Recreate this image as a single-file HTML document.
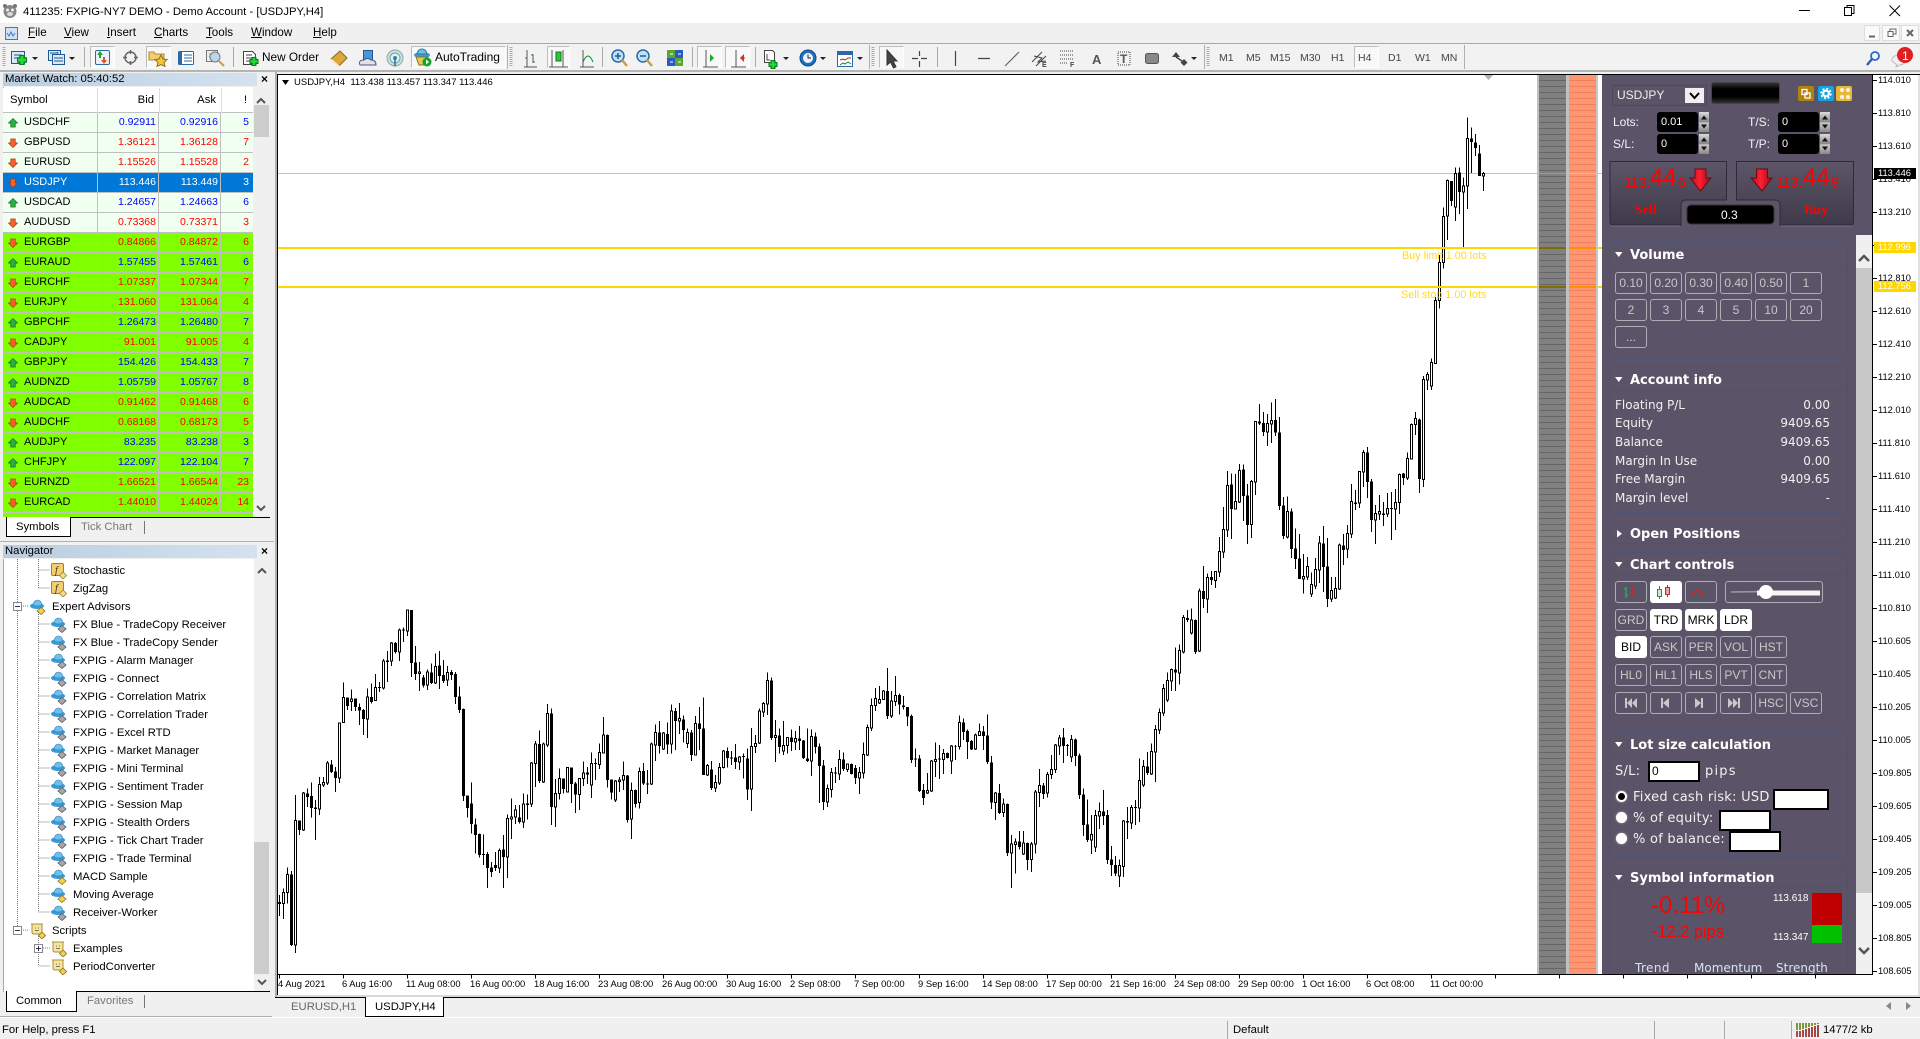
<!DOCTYPE html>
<html><head><meta charset="utf-8"><title>MT4</title>
<style>
html,body{margin:0;padding:0}
body{width:1920px;height:1039px;position:relative;overflow:hidden;background:#f0f0f0;font:11.3px/14px "Liberation Sans",sans-serif;color:#000}
.t,.p,.x,.box,.btn,.r,.ti,.tr{position:absolute;white-space:nowrap}
.box{box-sizing:border-box}
.p{left:1878px;font-size:9.3px;line-height:12px}
.x{top:978px;font-size:9.4px;line-height:12px}
.mn{top:26px;font-size:11.6px}
.tf{top:51px;color:#444;font-size:10.5px}
.r{left:3px;width:250px;height:20px;box-sizing:border-box;border-bottom:1px solid #c0c0c0;background:#f0fff0;line-height:19px;font-size:11px}
.g{background:#7fff00}
.r svg{position:absolute;left:5px;top:5px;width:10px;height:10px}
.r b{font-weight:normal;position:absolute;left:21px;top:0}
.r i{font-style:normal;position:absolute;top:0;height:19px;box-sizing:border-box;text-align:right;border-left:1px solid #c0c0c0;font-size:10.5px}
.r .b{left:94px;width:61px;padding-right:2px}
.r .a{left:155px;width:62px;padding-right:2px}
.r .n{left:217px;width:33px;padding-right:4px}
.u i{color:#00f}.d i{color:#f00}
.sel{background:#0078d7;color:#fff}.sel i{color:#fff}
.ti{left:73px;height:14px;line-height:14px;margin-top:.5px}
.ti svg,.tr svg{position:absolute;left:-22px;top:-1px;width:16px;height:16px}
.tr{left:52px;line-height:14px;margin-top:.5px}
.w{color:#f2f2f2;font-size:12px}
.dv{color:#f0f0f0;font:12px/14px "DejaVu Sans",sans-serif}
.lc{color:#f0f0f0;font:13px/14px "DejaVu Sans",sans-serif;letter-spacing:.25px}
.hd{color:#fff;font:bold 13px/14px "DejaVu Sans",sans-serif;left:1630px}
.bx{position:absolute;box-sizing:border-box;left:1609px;width:239px;border:1px solid #4c5376;border-radius:4px}
.ln{position:absolute;left:1609px;width:239px;height:1px;background:#4c5376}
.btn{box-sizing:border-box;width:32px;height:22px;border:1px solid #aeaeb6;border-radius:3px;color:#c8c8c8;text-align:center;font-size:12px;line-height:20px}
.on{background:#fff;color:#000;border-color:#fff}
.in{position:absolute;background:#000;border-radius:3px;color:#fff;box-sizing:border-box;padding-left:4px;height:20px;line-height:20px;font-size:11px;width:41px}
.sp{position:absolute;width:10px;height:20px;background:linear-gradient(#ddd,#888 49%,#555 50%,#ccc 52%,#888)}
.wi{position:absolute;box-sizing:border-box;background:#fff;border:2px solid #000;height:21px;color:#000;font-size:12px;line-height:17px;padding-left:2px}
.rad{position:absolute;left:1616px;width:11px;height:11px;border-radius:50%;background:#fff;box-shadow:0 0 2px #bbb}
.pb{position:absolute;top:46px;height:22px;box-sizing:border-box;border:1px solid #bdbdbd;border-right-color:#fff;border-bottom-color:#fff;background:#f8f8f8}
</style></head><body>

<svg width="0" height="0" style="position:absolute"><defs>
<symbol id="u" viewBox="0 0 11 11"><polygon points="5.5,.5 10.5,5.5 8,5.5 8,10 3,10 3,5.5 .5,5.5" fill="#2fae45" stroke="#0a6a1f" stroke-width=".7"/></symbol>
<symbol id="n" viewBox="0 0 11 11"><polygon points="3,1 8,1 8,5.5 10.5,5.5 5.5,10.5 .5,5.5 3,5.5" fill="#f4612a" stroke="#b23010" stroke-width=".7"/></symbol>
<symbol id="f" viewBox="0 0 16 16"><rect x=".5" y=".5" width="12" height="12" rx="1.5" fill="#f4cf6e" stroke="#a08030"/><text x="4" y="10.5" font-size="10" font-style="italic" font-family="Liberation Serif,serif" fill="#333">f</text><polygon points="12,9 15.5,12.5 12,16 8.500,12.500" fill="#f6dc8a" stroke="#a08030" stroke-width=".8"/></symbol>
<symbol id="hg" viewBox="0 0 16 16"><ellipse cx="7" cy="7" rx="7" ry="3" fill="#3a9ad8"/><path d="M3 6Q4 1 7.500 1T12 6Q7 8 3 6z" fill="#6cc0ea" stroke="#2a78b0" stroke-width=".6"/><polygon points="11,8.500 15,12 11,15.500 7,12" fill="#a8a8a8" stroke="#555" stroke-width=".8"/></symbol>
<symbol id="hy" viewBox="0 0 16 16"><ellipse cx="7" cy="7" rx="7" ry="3" fill="#3a9ad8"/><path d="M3 6Q4 1 7.500 1T12 6Q7 8 3 6z" fill="#6cc0ea" stroke="#2a78b0" stroke-width=".6"/><polygon points="11,8.500 15,12 11,15.500 7,12" fill="#f4d050" stroke="#8a7020" stroke-width=".8"/></symbol>
<symbol id="sc" viewBox="0 0 16 16"><path d="M2 1H12V11H4Q2 11 2 9zM1 1H13" fill="#f6e49a" stroke="#a89040"/><path d="M5 5h1M8 5h1M5 7.500h4" stroke="#776" /><polygon points="12,9 15.500,12.500 12,16 8.500,12.500" fill="#f4d050" stroke="#8a7020" stroke-width=".8"/></symbol>
<linearGradient id="bt" x1="0" y1="0" x2="0" y2="1"><stop offset="0" stop-color="#5c5668"/><stop offset="1" stop-color="#3f3a4a"/></linearGradient>
<linearGradient id="ra" x1="0" y1="0" x2="1" y2="0"><stop offset="0" stop-color="#b50f1f"/><stop offset=".45" stop-color="#ff2030"/><stop offset="1" stop-color="#a00a18"/></linearGradient>
</defs></svg>

<!-- title bar -->
<div class="box" style="left:0;top:0;width:1920px;height:23px;background:#fff"></div>
<svg class="box" style="left:2px;top:3px" width="16" height="16" viewBox="0 0 16 16"><circle cx="8" cy="8.500" r="6.500" fill="#888"/><circle cx="3" cy="3" r="2" fill="#777"/><circle cx="13" cy="3" r="2" fill="#777"/><circle cx="5.500" cy="7" r="1.500" fill="#eee"/><circle cx="10.500" cy="7" r="1.500" fill="#eee"/><ellipse cx="8" cy="11" rx="3" ry="2" fill="#ddd"/></svg>
<div class="t" style="left:23px;top:5px">411235: FXPIG-NY7 DEMO - Demo Account - [USDJPY,H4]</div>
<svg class="box" style="left:1790px;top:0" width="130" height="23"><path d="M9 10.500H20" stroke="#000"/><path d="M54.500 7.500h7v8h-7zM57 7.500V5.500h7v8h-2.500" fill="none" stroke="#000"/><path d="M99.500 5.500l10.500 10.500M110 5.500L99.500 16" stroke="#000" fill="none"/></svg>

<!-- menu bar -->
<div class="box" style="left:0;top:23px;width:1920px;height:20px;background:#f0f0f0"></div>
<svg class="box" style="left:4px;top:25px" width="16" height="16"><rect x="1.500" y="2.500" width="12" height="12" fill="#cfe3f5" stroke="#3a7cc0"/><path d="M3 8l2 3 2-4 2 4 2-3" fill="none" stroke="#3a7cc0"/></svg>
<div class="t mn" style="left:28px"><u>F</u>ile</div><div class="t mn" style="left:64px"><u>V</u>iew</div><div class="t mn" style="left:107px"><u>I</u>nsert</div><div class="t mn" style="left:154px"><u>C</u>harts</div><div class="t mn" style="left:206px"><u>T</u>ools</div><div class="t mn" style="left:251px"><u>W</u>indow</div><div class="t mn" style="left:313px"><u>H</u>elp</div>
<div class="box" style="left:1864px;top:25px;width:16px;height:16px;background:#fafafa;border:1px solid #ddd"></div>
<div class="box" style="left:1882px;top:25px;width:18px;height:16px;background:#fafafa;border:1px solid #ddd"></div>
<div class="box" style="left:1901px;top:25px;width:18px;height:16px;background:#fafafa;border:1px solid #ddd"></div>
<svg class="box" style="left:1864px;top:25px" width="56" height="16"><path d="M5 11.500h6" stroke="#666" stroke-width="2"/><path d="M24 6.500h5v5h-5zM26 6V4h6v5h-3" fill="none" stroke="#666"/><path d="M43 5l6 6M49 5l-6 6" stroke="#666" stroke-width="2"/></svg>
<div class="box" style="left:0;top:43px;width:1920px;height:1px;background:#a8a8a8"></div>
<div class="box" style="left:0;top:44px;width:1920px;height:26px;background:#f2f2f2"></div>
<div class="box" style="left:0;top:70px;width:1920px;height:2px;background:#b4b4b4"></div>

<!-- toolbar pressed buttons -->
<div class="pb" style="left:90px;width:25px"></div><div class="pb" style="left:146px;width:25px"></div>
<div class="pb" style="left:411px;width:95px"></div><div class="pb" style="left:547px;width:23px"></div>
<div class="pb" style="left:697px;width:25px"></div><div class="pb" style="left:725px;width:25px"></div>
<div class="pb" style="left:879px;width:25px"></div><div class="pb" style="left:1354px;width:25px"></div>

<!-- toolbar icons -->
<svg class="box" style="left:0;top:44px" width="1920" height="27" viewBox="0 44 1920 27">
<g fill="none" stroke="#aaa"><path d="M84.500 47v20M233.500 47v20M602.500 47v20M692.500 47v20M755.500 47v20M937.500 47v20"/></g>
<g stroke="#b0b0b0"><path d="M507.500 45v24M869.500 45v24M1204.500 45v24M1464.500 45v24"/></g>
<g stroke="#aaa" stroke-width="3" stroke-dasharray="1 1"><path d="M4 47v20M511 47v20M873 47v20M1208 47v20"/></g>
<g fill="#222"><path d="M32 57h6l-3 3zM69 57h6l-3 3zM783 57h6l-3 3zM820 57h6l-3 3zM857 57h6l-3 3zM1191 57h6l-3 3z"/></g>
<!-- new chart -->
<rect x="11.500" y="51.500" width="13" height="12" fill="#dce8f4" stroke="#1f5a98"/><path d="M14 55h8M14 58h8" stroke="#1f5a98"/>
<path d="M22 55v10M17 60h10" stroke="#0a7a1a" stroke-width="5.500"/><path d="M22 56v8M18 60h8" stroke="#28d83a" stroke-width="3"/>
<!-- profiles -->
<rect x="48.500" y="50.500" width="12" height="10" fill="#dce8f4" stroke="#1f5a98"/><rect x="52.500" y="54.500" width="12" height="10" fill="#dce8f4" stroke="#1f5a98"/><path d="M50 53h8l-1-1M54 58h9M54 61h9" stroke="#1f5a98" fill="none"/>
<!-- market watch button -->
<rect x="95.500" y="50.500" width="14" height="14" rx="1.500" fill="#eaf3fb" stroke="#2a6aa8"/><path d="M100 51l-3 4h2v3h2v-3h2z" fill="#1ea82e"/><path d="M104 64l3-4h-2v-3h-2v3h-2z" fill="#e8501f"/>
<!-- crosshair -->
<circle cx="130.500" cy="57.500" r="5.500" fill="none" stroke="#666" stroke-width="1.500"/><path d="M130.500 50v4M130.500 61v4M123 57.500h4M134 57.500h4" stroke="#666" stroke-width="1.500"/>
<!-- folder star -->
<path d="M149 52h5l1 2h9v6h-15z" fill="#f4cf6e" stroke="#b08a30"/><path d="M161 55l2 4 4 .5-3 3 1 4-4-2-4 2 1-4-3-3 4-.5z" fill="#f4c83a" stroke="#8a7020"/>
<!-- list -->
<rect x="178.500" y="51.500" width="15" height="13" rx="1" fill="#fff" stroke="#2a6aa8"/><rect x="179" y="52" width="3" height="12" fill="#2a6aa8"/><path d="M184 55h8M184 58h8M184 61h8" stroke="#2a6aa8"/>
<!-- mag chart -->
<rect x="206.500" y="50.500" width="11" height="11" fill="#eee" stroke="#777"/><path d="M209 54h6M209 57h6" stroke="#888"/><circle cx="215" cy="57" r="5" fill="#bcd6ea" stroke="#778"/><path d="M219 61l5 5" stroke="#c9a23a" stroke-width="2"/>
<!-- new order -->
<path d="M243.500 51.500h9l3 3v10h-12z" fill="#fff" stroke="#444"/><path d="M246 55h6M246 58h7M246 61h7" stroke="#444"/><path d="M254 57v9M249.500 61.500h9" stroke="#0a7a1a" stroke-width="5"/><path d="M254 58v7M250.500 61.500h7" stroke="#28d83a" stroke-width="2.500"/>
<!-- book -->
<path d="M331 59l9-8 7 7-8 8z" fill="#dca83a" stroke="#8a6520"/><path d="M331 59l8 7 0 1" stroke="#fff3c0" fill="none"/>
<!-- cloud -->
<rect x="363.500" y="50.500" width="9" height="10" fill="#4a94d8" stroke="#1f5a98"/><path d="M360 65q-2-5 4-5 3-3 7 0 5 0 5 5z" fill="#d9e4f0" stroke="#557"/>
<!-- signal -->
<circle cx="395" cy="58" r="8" fill="#cfe0d8" stroke="#8aa"/><circle cx="395" cy="58" r="5" fill="#e5f0e8" stroke="#6aa"/><circle cx="395" cy="58" r="2" fill="#2a8ac8"/><path d="M395 58v8" stroke="#2a6aa8" stroke-width="1.500"/>
<!-- autotrading -->
<ellipse cx="422" cy="55" rx="8" ry="3" fill="#3a9ad8"/><path d="M417 54q1-5 5-5t5 5z" fill="#6cc0ea" stroke="#2a78b0"/><path d="M416 57l3 8h6l3-8z" fill="#e8c84a" stroke="#8a7020"/><circle cx="427" cy="62" r="4.500" fill="#14a32a"/><path d="M426 59.500v5l3-2.500z" fill="#fff"/>
<!-- chart types -->
<g fill="none" stroke="#555"><path d="M524 67h13M527 50v17"/><path d="M533 54v9"/></g><path d="M525 58h2M533 62h2M533 55h-2" stroke="#0a9a2a"/>
<g fill="none" stroke="#555"><path d="M549 67h19M552 50v17M563 50v17"/></g><rect x="556" y="52" width="5" height="9" fill="#2ac83a" stroke="#0a7a1a"/>
<g fill="none" stroke="#555"><path d="M580 67h14M583 50v17"/></g><path d="M583 62q5-12 10 0" fill="none" stroke="#0a8a2a"/>
<!-- zoom -->
<circle cx="618" cy="56" r="6" fill="#bfe0f5" stroke="#2a6aa8" stroke-width="1.500"/><path d="M615 56h6M618 53v6" stroke="#1f5a98" stroke-width="1.500"/><path d="M622 60l5 6" stroke="#c9a23a" stroke-width="2.500"/>
<circle cx="643" cy="56" r="6" fill="#bfe0f5" stroke="#2a6aa8" stroke-width="1.500"/><path d="M640 56h6" stroke="#1f5a98" stroke-width="1.500"/><path d="M647 60l5 6" stroke="#c9a23a" stroke-width="2.500"/>
<!-- tile -->
<rect x="667" y="50" width="8" height="8" fill="#5aa82a"/><rect x="675" y="50" width="8" height="8" fill="#2a5ac8"/><rect x="667" y="58" width="8" height="8" fill="#2a5ac8"/><rect x="675" y="58" width="8" height="8" fill="#5aa82a"/><path d="M670 54h3M678 54h3M670 62h3M678 62h3" stroke="#fff"/>
<!-- autoscroll shift -->
<g fill="none" stroke="#555"><path d="M703 67h15M706 50v17"/><path d="M731 67h15M736 50v17"/></g><path d="M710 54v8l4-4z" fill="#1ea82e"/><path d="M744 54v8l-4-4z" fill="#d8301f"/><path d="M740 58h5" stroke="#d8301f"/>
<!-- add indicator -->
<path d="M764.500 50.500h8l2 2v10h-10z" fill="#fff" stroke="#444"/><path d="M767 54v6h3" fill="none" stroke="#444"/><path d="M773 60v9M768.500 64.500h9" stroke="#0a7a1a" stroke-width="5"/><path d="M773 61v7M769.500 64.500h7" stroke="#28d83a" stroke-width="2.500"/>
<!-- clock -->
<circle cx="808" cy="58" r="8" fill="#1c70c0" stroke="#104a88"/><circle cx="808" cy="58" r="5" fill="#f0f4fa"/><path d="M808 54.500v3.500h3" stroke="#222" fill="none"/>
<!-- template -->
<rect x="837.500" y="51.500" width="15" height="15" fill="#fff" stroke="#2a6aa8"/><rect x="838" y="52" width="14" height="3" fill="#2a6aa8"/><path d="M840 60l3-1 2 1 3-2 3 0" stroke="#a03010" fill="none"/><path d="M840 65l3-2 2 1 3-2 3 2" stroke="#1a8a2a" fill="none"/>
<!-- cursor -->
<path d="M887 50v15l3.500-3 3 6 2.500-1.200-3-5.800h4z" fill="#444" stroke="#333"/>
<!-- cross -->
<path d="M919.500 51v5M919.500 61v6M912 58.500h6M921 58.500h6" stroke="#444" stroke-width="1.200"/>
<path d="M955.500 51v15M978 58.500h12" stroke="#444" stroke-width="1.200"/><path d="M1005 66l14-14" stroke="#666" stroke-width="1.200"/>
<!-- channel -->
<path d="M1032 62l10-10M1036 66l10-10M1034 56l8 2-4 4 8-1" stroke="#444" fill="none"/><text x="1042" y="67" font-size="7" font-weight="bold" fill="#444" font-family="Liberation Sans,sans-serif">E</text>
<!-- fibo -->
<path d="M1060 51h14M1060 55h14M1060 59h14M1060 63h7" stroke="#444" stroke-dasharray="1 1"/><text x="1070" y="67" font-size="7" font-weight="bold" fill="#444" font-family="Liberation Sans,sans-serif">F</text>
<text x="1092" y="64" font-size="13" font-weight="bold" fill="#555" font-family="Liberation Sans,sans-serif">A</text>
<rect x="1118" y="52" width="12" height="13" fill="none" stroke="#444" stroke-dasharray="1 1"/><text x="1120" y="63" font-size="12" font-weight="bold" fill="#555" font-family="Liberation Sans,sans-serif">T</text>
<rect x="1145.500" y="53.500" width="13" height="10" rx="2" fill="#888" stroke="#555"/>
<path d="M1176 52l-4 5h8zM1184 59l-3.500 3.500 3.500 3.500 3.500-3.500z" fill="#444"/><path d="M1176 57l6 4" stroke="#444" stroke-width="1.500"/>
<!-- search + chat -->
<circle cx="1875" cy="56" r="4" fill="none" stroke="#2a6ac8" stroke-width="1.800"/><path d="M1872 59l-5 6" stroke="#2a5ab0" stroke-width="2.200"/>
<path d="M1892 61a7 5 0 1 1 8 4l-4 2 1-2z" fill="#f0f0f0" stroke="#bbb"/>
<circle cx="1905" cy="55" r="8" fill="#e02020"/><text x="1902" y="60" font-size="12" fill="#fff" font-family="Liberation Sans,sans-serif">1</text>
</svg>
<div class="t" style="left:262px;top:50px;font-size:11.800px">New Order</div>
<div class="t" style="left:435px;top:50px;font-size:12px">AutoTrading</div>
<div class="t tf" style="left:1219px">M1</div><div class="t tf" style="left:1246px">M5</div><div class="t tf" style="left:1270px">M15</div><div class="t tf" style="left:1300px">M30</div><div class="t tf" style="left:1331px">H1</div><div class="t tf" style="left:1358px">H4</div><div class="t tf" style="left:1388px">D1</div><div class="t tf" style="left:1415px">W1</div><div class="t tf" style="left:1441px">MN</div>

<!-- Market watch -->
<div class="box" style="left:3px;top:73px;width:254px;height:13px;background:linear-gradient(90deg,#b9cde0,#d4e2ef)"></div>
<div class="t" style="left:5px;top:73px;font-size:11.300px;line-height:13px">Market Watch: 05:40:52</div>
<div class="t" style="left:261px;top:73px;font-weight:bold;font-size:12px;line-height:13px">×</div>
<div class="box" style="left:3px;top:87px;width:250px;height:430px;background:#fff;border-left:1px solid #aaa"></div>
<div class="box" style="left:3px;top:88px;width:250px;height:25px;background:#fff;border-bottom:1px solid #c0c0c0"></div>
<div class="box" style="left:97px;top:88px;width:1px;height:25px;background:#ddd"></div><div class="box" style="left:159px;top:88px;width:1px;height:25px;background:#ddd"></div><div class="box" style="left:221px;top:88px;width:1px;height:25px;background:#ddd"></div>
<div class="t" style="left:10px;top:93px;font-size:11.300px">Symbol</div><div class="t" style="right:1766px;top:93px">Bid</div><div class="t" style="right:1704px;top:93px">Ask</div><div class="t" style="right:1673px;top:93px">!</div>

<div class="r u" style="top:113px"><svg><use href="#u"/></svg><b>USDCHF</b><i class="b">0.92911</i><i class="a">0.92916</i><i class="n">5</i></div>
<div class="r d" style="top:133px"><svg><use href="#n"/></svg><b>GBPUSD</b><i class="b">1.36121</i><i class="a">1.36128</i><i class="n">7</i></div>
<div class="r d" style="top:153px"><svg><use href="#n"/></svg><b>EURUSD</b><i class="b">1.15526</i><i class="a">1.15528</i><i class="n">2</i></div>
<div class="r sel" style="top:173px"><svg><use href="#n"/></svg><b>USDJPY</b><i class="b">113.446</i><i class="a">113.449</i><i class="n">3</i></div>
<div class="r u" style="top:193px"><svg><use href="#u"/></svg><b>USDCAD</b><i class="b">1.24657</i><i class="a">1.24663</i><i class="n">6</i></div>
<div class="r d" style="top:213px"><svg><use href="#n"/></svg><b>AUDUSD</b><i class="b">0.73368</i><i class="a">0.73371</i><i class="n">3</i></div>
<div class="r d g" style="top:233px"><svg><use href="#n"/></svg><b>EURGBP</b><i class="b">0.84866</i><i class="a">0.84872</i><i class="n">6</i></div>
<div class="r u g" style="top:253px"><svg><use href="#u"/></svg><b>EURAUD</b><i class="b">1.57455</i><i class="a">1.57461</i><i class="n">6</i></div>
<div class="r d g" style="top:273px"><svg><use href="#n"/></svg><b>EURCHF</b><i class="b">1.07337</i><i class="a">1.07344</i><i class="n">7</i></div>
<div class="r d g" style="top:293px"><svg><use href="#n"/></svg><b>EURJPY</b><i class="b">131.060</i><i class="a">131.064</i><i class="n">4</i></div>
<div class="r u g" style="top:313px"><svg><use href="#u"/></svg><b>GBPCHF</b><i class="b">1.26473</i><i class="a">1.26480</i><i class="n">7</i></div>
<div class="r d g" style="top:333px"><svg><use href="#n"/></svg><b>CADJPY</b><i class="b">91.001</i><i class="a">91.005</i><i class="n">4</i></div>
<div class="r u g" style="top:353px"><svg><use href="#u"/></svg><b>GBPJPY</b><i class="b">154.426</i><i class="a">154.433</i><i class="n">7</i></div>
<div class="r u g" style="top:373px"><svg><use href="#u"/></svg><b>AUDNZD</b><i class="b">1.05759</i><i class="a">1.05767</i><i class="n">8</i></div>
<div class="r d g" style="top:393px"><svg><use href="#n"/></svg><b>AUDCAD</b><i class="b">0.91462</i><i class="a">0.91468</i><i class="n">6</i></div>
<div class="r d g" style="top:413px"><svg><use href="#n"/></svg><b>AUDCHF</b><i class="b">0.68168</i><i class="a">0.68173</i><i class="n">5</i></div>
<div class="r u g" style="top:433px"><svg><use href="#u"/></svg><b>AUDJPY</b><i class="b">83.235</i><i class="a">83.238</i><i class="n">3</i></div>
<div class="r u g" style="top:453px"><svg><use href="#u"/></svg><b>CHFJPY</b><i class="b">122.097</i><i class="a">122.104</i><i class="n">7</i></div>
<div class="r d g" style="top:473px"><svg><use href="#n"/></svg><b>EURNZD</b><i class="b">1.66521</i><i class="a">1.66544</i><i class="n">23</i></div>
<div class="r d g" style="top:493px"><svg><use href="#n"/></svg><b>EURCAD</b><i class="b">1.44010</i><i class="a">1.44024</i><i class="n">14</i></div>
<div class="r g" style="top:513px;height:4px;border:0"></div>

<!-- watch scrollbar -->
<div class="box" style="left:253px;top:88px;width:16px;height:429px;background:#f0f0f0"></div>
<div class="box" style="left:254px;top:105px;width:15px;height:32px;background:#cdcdcd"></div>
<svg class="box" style="left:253px;top:88px" width="16" height="429"><path d="M4 15l4-4 4 4M4 418l4 4 4-4" fill="none" stroke="#555" stroke-width="2"/></svg>
<div class="box" style="left:6px;top:517px;width:264px;height:1px;background:#000"></div>
<div class="box" style="left:6px;top:517px;width:65px;height:20px;background:#fff;border:1px solid #000;border-top:0"></div>
<div class="t" style="left:16px;top:520px">Symbols</div><div class="t" style="left:81px;top:520px;color:#777">Tick Chart</div>
<div class="box" style="left:144px;top:521px;width:1px;height:13px;background:#777"></div>
<div class="box" style="left:0;top:541px;width:274px;height:1px;background:#b0b0b0"></div>

<!-- navigator -->
<div class="box" style="left:3px;top:545px;width:254px;height:13px;background:linear-gradient(90deg,#b9cde0,#d4e2ef)"></div>
<div class="t" style="left:5px;top:545px;line-height:13px">Navigator</div><div class="t" style="left:261px;top:545px;font-weight:bold;font-size:12px;line-height:13px">×</div>
<div class="box" style="left:3px;top:559px;width:251px;height:433px;background:#fff;border-left:1px solid #aaa"></div>
<svg class="box" style="left:0;top:540px" width="60" height="450" viewBox="0 540 60 450"><g stroke="#777" stroke-dasharray="1 1" fill="none"><path d="M17.500 559V930M38.500 559V588M38.500 612V912M38.500 936V966M38.500 570H50M38.500 588H50M21 606H29M21 930H29"/><path d="M38.500 624H50M38.500 642H50M38.500 660H50M38.500 678H50M38.500 696H50M38.500 714H50M38.500 732H50M38.500 750H50M38.500 768H50M38.500 786H50M38.500 804H50M38.500 822H50M38.500 840H50M38.500 858H50M38.500 876H50M38.500 894H50M38.500 912H50M43 948H50M38.500 966H50"/></g>
<g fill="#fff" stroke="#888"><rect x="13.500" y="602.500" width="8" height="8"/><rect x="13.500" y="926.500" width="8" height="8"/><rect x="34.500" y="944.500" width="8" height="8"/></g><path d="M15 606.500h5M15 930.500h5M36 948.500h5M38.500 946v5" stroke="#335"/></svg>
<div class="ti" style="top:563px"><svg><use href="#f"/></svg>Stochastic</div>
<div class="ti" style="top:581px"><svg><use href="#f"/></svg>ZigZag</div>
<div class="tr" style="top:599px"><svg><use href="#hy"/></svg>Expert Advisors</div>
<div class="ti" style="top:617px"><svg><use href="#hg"/></svg>FX Blue - TradeCopy Receiver</div>
<div class="ti" style="top:635px"><svg><use href="#hg"/></svg>FX Blue - TradeCopy Sender</div>
<div class="ti" style="top:653px"><svg><use href="#hg"/></svg>FXPIG - Alarm Manager</div>
<div class="ti" style="top:671px"><svg><use href="#hg"/></svg>FXPIG - Connect</div>
<div class="ti" style="top:689px"><svg><use href="#hg"/></svg>FXPIG - Correlation Matrix</div>
<div class="ti" style="top:707px"><svg><use href="#hg"/></svg>FXPIG - Correlation Trader</div>
<div class="ti" style="top:725px"><svg><use href="#hg"/></svg>FXPIG - Excel RTD</div>
<div class="ti" style="top:743px"><svg><use href="#hg"/></svg>FXPIG - Market Manager</div>
<div class="ti" style="top:761px"><svg><use href="#hg"/></svg>FXPIG - Mini Terminal</div>
<div class="ti" style="top:779px"><svg><use href="#hg"/></svg>FXPIG - Sentiment Trader</div>
<div class="ti" style="top:797px"><svg><use href="#hg"/></svg>FXPIG - Session Map</div>
<div class="ti" style="top:815px"><svg><use href="#hg"/></svg>FXPIG - Stealth Orders</div>
<div class="ti" style="top:833px"><svg><use href="#hg"/></svg>FXPIG - Tick Chart Trader</div>
<div class="ti" style="top:851px"><svg><use href="#hg"/></svg>FXPIG - Trade Terminal</div>
<div class="ti" style="top:869px"><svg><use href="#hy"/></svg>MACD Sample</div>
<div class="ti" style="top:887px"><svg><use href="#hy"/></svg>Moving Average</div>
<div class="ti" style="top:905px"><svg><use href="#hg"/></svg>Receiver-Worker</div>
<div class="tr" style="top:923px"><svg><use href="#sc"/></svg>Scripts</div>
<div class="ti" style="top:941px"><svg><use href="#sc"/></svg>Examples</div>
<div class="ti" style="top:959px"><svg><use href="#sc"/></svg>PeriodConverter</div>
<div class="box" style="left:254px;top:559px;width:15px;height:433px;background:#f0f0f0"></div>
<div class="box" style="left:254px;top:842px;width:15px;height:132px;background:#cdcdcd"></div>
<svg class="box" style="left:254px;top:559px" width="15" height="433"><path d="M4 14l4-4 4 4M4 421l4 4 4-4" fill="none" stroke="#555" stroke-width="2"/></svg>
<div class="box" style="left:6px;top:991px;width:264px;height:1px;background:#000"></div>
<div class="box" style="left:6px;top:991px;width:71px;height:21px;background:#fff;border:1px solid #000;border-top:0"></div>
<div class="t" style="left:16px;top:994px">Common</div><div class="t" style="left:87px;top:994px;color:#777">Favorites</div>
<div class="box" style="left:144px;top:995px;width:1px;height:13px;background:#777"></div>
<div class="box" style="left:0;top:1016px;width:272px;height:1px;background:#b0b0b0"></div>

<!-- chart frame -->
<div class="box" style="left:275px;top:72px;width:2px;height:945px;background:#b0b0b0"></div>
<div class="box" style="left:277px;top:74px;width:1643px;height:922px;background:#fff;border-top:1px solid #000;border-left:1px solid #000"></div>

<!-- chart -->
<svg class="box" style="left:0;top:0" width="1920" height="1039">
<defs><clipPath id="cc"><rect x="278" y="75" width="1330" height="899"/></clipPath></defs>
<path d="M278 173.500H1602" stroke="#c0c0c0"/>
<g clip-path="url(#cc)" shape-rendering="crispEdges">
<g transform="translate(270.17 590.17) scale(.33333)" stroke="#000" stroke-width="3">
<path fill="none" d="M28 915V978M40 895V987M52 832V940M64 843V1068M76 615V1088M88 691V735M100 605V722M112 595V650M124 577V682M136 630V750M148 560V675M160 560V590M172 513V585M184 510V548M196 530V605M208 397V578M220 277V398M232 322V360M244 298V362M256 325V362M268 340V404M280 357V435M292 295V443M304 280V340M316 252V332M328 275V305M340 207V298M352 183V275M364 155V228M376 155V190M388 115V213M400 112V155M412 58V137M424 60V260M436 168V270M448 215V302M460 255V292M472 238V300M484 220V282M496 190V282M508 183V297M520 210V278M532 228V288M544 240V270M556 245V342M568 289V368M580 355V632M592 616V682M604 577V730M616 685V790M628 730V802M640 733V825M652 786V893M664 815V860M676 785V842M688 775V848M700 735V893M712 673V863M724 625V747M736 645V702M748 645V700M760 610V713M772 613V688M784 515V650M796 453V590M808 421V578M820 457V578M832 342V470M844 355V705M856 567V710M868 535V628M880 565V610M892 532V607M904 532V638M916 575V668M928 565V660M940 514V588M952 530V582M964 487V624M976 505V570M988 460V537M1000 381V490M1012 433V592M1024 568V628M1036 570V636M1048 560V605M1060 514V600M1072 555V697M1084 577V747M1096 598V652M1108 532V655M1120 519V585M1132 540V612M1144 457V585M1156 403V513M1168 393V490M1180 425V480M1192 397V492M1204 343V490M1216 353V480M1228 338V432M1240 376V457M1252 415V473M1264 420V513M1276 378V495M1288 351V480M1300 322V555M1312 522V558M1324 513V600M1336 555V605M1348 518V585M1360 480V535M1372 472V532M1384 482V525M1396 462V537M1408 498V540M1420 490V565M1432 475V630M1444 413V662M1456 435V488M1468 355V462M1480 335V380M1492 247V375"/>
<path fill="#000" stroke-width="9" d="M28 935V942M64 853V1065M88 691V720M112 610V620M124 618V654M136 652V656M184 523V546M196 544V563M232 322V347M256 325V350M268 350V361M280 360V386M304 320V336M328 290V293M352 211V215M376 158V186M400 118V121M424 60V218M436 217V252M460 262V286M484 247V278M508 226V257M520 255V272M544 246V254M556 252V320M568 319V359M580 357V617M592 616V653M604 640V701M616 703V734M628 732V794M640 792V795M652 792V833M664 832V845M676 824V833M700 778V800M748 682V696M772 640V644M808 462V573M844 370V650M880 565V597M904 532V581M916 580V613M952 547V553M976 519V522M1012 435V569M1024 568V607M1072 556V690M1096 600V641M1120 543V580M1132 580V583M1168 427V467M1192 432V463M1216 363V392M1240 388V420M1264 427V494M1288 400V416M1300 415V555M1324 538V594M1372 483V503M1384 502V505M1396 502V516M1420 498V501M1432 505V598"/>
<path fill="#fff" d="M40 907m-3 0h6V940h-6zM52 853m-3 0h6V907h-6zM76 691m-3 0h6V1064h-6zM100 609m-3 0h6V720h-6zM148 583m-3 0h6V656h-6zM160 577m-3 0h6V584h-6zM172 519m-3 0h6V579h-6zM208 399m-3 0h6V563h-6zM220 322m-3 0h6V397h-6zM244 326m-3 0h6V334h-6zM292 320m-3 0h6V386h-6zM316 292m-3 0h6V331h-6zM340 213m-3 0h6V294h-6zM364 159m-3 0h6V212h-6zM388 120m-3 0h6V186h-6zM412 60m-3 0h6V122h-6zM448 245m-3 0h6V250h-6zM472 246m-3 0h6V284h-6zM496 229m-3 0h6V279h-6zM532 247m-3 0h6V270h-6zM688 781m-3 0h6V834h-6zM712 685m-3 0h6V800h-6zM724 680m-3 0h6V686h-6zM736 660m-3 0h6V680h-6zM760 642m-3 0h6V695h-6zM784 519m-3 0h6V641h-6zM796 462m-3 0h6V520h-6zM820 462m-3 0h6V576h-6zM832 370m-3 0h6V464h-6zM856 610m-3 0h6V650h-6zM868 565m-3 0h6V610h-6zM892 532m-3 0h6V605h-6zM928 565m-3 0h6V613h-6zM940 548m-3 0h6V565h-6zM964 520m-3 0h6V584h-6zM988 487m-3 0h6V523h-6zM1000 435m-3 0h6V488h-6zM1036 573m-3 0h6V630h-6zM1048 569m-3 0h6V574h-6zM1060 556m-3 0h6V570h-6zM1084 601m-3 0h6V686h-6zM1108 544m-3 0h6V637h-6zM1144 461m-3 0h6V582h-6zM1156 427m-3 0h6V464h-6zM1180 429m-3 0h6V477h-6zM1204 363m-3 0h6V461h-6zM1228 385m-3 0h6V392h-6zM1252 427m-3 0h6V460h-6zM1276 400m-3 0h6V494h-6zM1312 526m-3 0h6V554h-6zM1336 577m-3 0h6V593h-6zM1348 532m-3 0h6V578h-6zM1360 483m-3 0h6V532h-6zM1408 500m-3 0h6V515h-6zM1444 469m-3 0h6V596h-6zM1456 460m-3 0h6V469h-6zM1468 363m-3 0h6V459h-6zM1480 340m-3 0h6V365h-6zM1492 271m-3 0h6V341h-6z"/>
</g>
<g transform="translate(770.17 590.17) scale(.33333)" stroke="#000" stroke-width="3">
<path fill="none" d="M4 262V450M16 390V515M28 415V490M40 393V495M52 440V490M64 418V483M76 423V480M88 408V480M100 449V506M112 415V515M124 418V557M136 427V490M148 460V638M160 510V660M172 583V650M184 533V622M196 530V578M208 480V570M220 487V542M232 520V545M244 520V553M256 525V582M268 531V612M280 457V565M292 403V497M304 325V422M316 294V362M328 288V342M340 300V330M352 234V386M364 303V383M376 258V348M388 310V373M400 318V358M412 350V407M424 373V518M436 475V530M448 495V606M460 582V644M472 548V612M484 510V605M496 457V560M508 465V567M520 477V552M532 487V505M544 465V552M556 465V510M568 376V478M580 385V450M592 418V507M604 450V480M616 430V480M628 400V438M640 408V480M652 373V522M664 498V657M676 605V690M688 582V672M700 625V680M712 640V798M724 735V893M736 745V850M748 722V778M760 722V795M772 757V840M784 755V846M796 600V790M808 537V650M820 578V627M832 545V622M844 495V566M856 462V548M868 435V495M880 414V518M892 462V497M904 435V516M916 445V527M928 490V626M940 595V738M952 628V756M964 675V792M976 660V786M988 637V717M1000 600V705M1012 660V822M1024 768V857M1036 798V857M1048 808V890M1060 690V860M1072 650V747M1084 645V716M1096 630V705M1108 505V696M1120 510V590M1132 485V555M1144 460V555M1156 405V575M1168 355V432M1180 282V378M1192 247V335M1204 235V302M1216 172V302M1228 163V283M1240 75V190M1252 60V95M1264 55V133M1276 88V192M1288 -5V186"/>
<path fill="#000" stroke-width="9" d="M4 271V443M28 436V470M64 442V455M88 445V452M100 451V503M112 505V512M136 439V470M148 469V527M160 526V635M196 547V550M220 508V537M244 522V552M256 534V563M352 303V378M388 315V343M400 346V350M412 351V379M424 378V510M436 505V508M448 505V603M460 600V623M508 505V508M532 489V503M556 467V469M580 397V425M592 423V455M604 453V478M640 424V437M652 436V515M664 517V637M688 609V669M712 642V788M748 754V770M772 759V809M820 586V611M880 442V467M892 465V468M916 448V498M928 496V614M940 613V705M952 703V749M1000 664V677M1012 675V809M1024 808V824M1036 824V850M1072 693V697M1096 651V653M1132 529V549M1216 238V247M1252 83V90M1276 90V186"/>
<path fill="#fff" d="M16 436m-3 0h6V442h-6zM40 466m-3 0h6V482h-6zM52 442m-3 0h6V466h-6zM76 445m-3 0h6V455h-6zM124 439m-3 0h6V512h-6zM172 595m-3 0h6V635h-6zM184 547m-3 0h6V598h-6zM208 508m-3 0h6V551h-6zM232 522m-3 0h6V538h-6zM268 547m-3 0h6V563h-6zM280 493m-3 0h6V548h-6zM292 412m-3 0h6V494h-6zM304 346m-3 0h6V413h-6zM316 325m-3 0h6V346h-6zM328 328m-3 0h6V339h-6zM340 303m-3 0h6V328h-6zM364 333m-3 0h6V378h-6zM376 316m-3 0h6V334h-6zM472 601m-3 0h6V609h-6zM484 513m-3 0h6V603h-6zM496 508m-3 0h6V514h-6zM520 490m-3 0h6V508h-6zM544 467m-3 0h6V512h-6zM568 397m-3 0h6V469h-6zM616 435m-3 0h6V476h-6zM628 424m-3 0h6V436h-6zM676 609m-3 0h6V637h-6zM700 641m-3 0h6V667h-6zM724 761m-3 0h6V788h-6zM736 755m-3 0h6V763h-6zM760 759m-3 0h6V792h-6zM784 761m-3 0h6V808h-6zM796 606m-3 0h6V761h-6zM808 586m-3 0h6V607h-6zM832 553m-3 0h6V608h-6zM844 538m-3 0h6V553h-6zM856 465m-3 0h6V538h-6zM868 444m-3 0h6V467h-6zM904 448m-3 0h6V500h-6zM964 733m-3 0h6V749h-6zM976 676m-3 0h6V770h-6zM988 664m-3 0h6V677h-6zM1048 826m-3 0h6V857h-6zM1060 693m-3 0h6V829h-6zM1084 652m-3 0h6V698h-6zM1108 571m-3 0h6V653h-6zM1120 529m-3 0h6V585h-6zM1144 484m-3 0h6V552h-6zM1156 418m-3 0h6V485h-6zM1168 367m-3 0h6V419h-6zM1180 295m-3 0h6V368h-6zM1192 271m-3 0h6V330h-6zM1204 238m-3 0h6V272h-6zM1228 181m-3 0h6V248h-6zM1240 82m-3 0h6V186h-6zM1264 90m-3 0h6V128h-6zM1288 3m-3 0h6V183h-6z"/>
</g>
<g transform="translate(1200.17 380.17) scale(.33333)" stroke="#000" stroke-width="3">
<path fill="none" d="M10 558V684M22 580V698M34 573V615M46 572V624M58 471V590M70 381V533M82 273V470M94 280V476M106 282V388M118 252V368M130 253V422M142 312V491M154 300V473M166 122V345M178 72V135M190 96V167M202 102V197M214 67V188M226 57V167M238 111V390M250 350V477M262 349V475M274 385V533M286 445V567M298 462V597M310 522V640M322 531V600M334 577V651M346 534V627M358 468V608M370 438V635M382 474V680M394 591V666M406 591V656M418 490V630M430 461V555M442 435V534M454 312V473M466 330V389M478 272V384M490 210V320M502 201V354M514 297V456M526 375V491M538 345V420M550 365V438M562 338V410M574 335V480M586 327V450M598 280V402M610 278V315M622 217V300M634 130V238M646 96V165M658 115V338"/>
<path fill="#000" stroke-width="9" d="M10 633V656M34 591V599M94 313V386M130 268V347M142 346V434M178 124V130M190 129V155M226 120V157M238 157V377M250 376V467M274 394V506M286 505V536M298 535V597M370 490V560M382 559V656M430 496V509M466 367V371M502 217V305M514 304V419M550 400V404M574 384V386M610 280V293M658 118V296"/>
<path fill="#fff" d="M22 592m-3 0h6V656h-6zM46 574m-3 0h6V601h-6zM58 514m-3 0h6V575h-6zM70 448m-3 0h6V515h-6zM82 316m-3 0h6V449h-6zM106 364m-3 0h6V386h-6zM118 271m-3 0h6V365h-6zM154 304m-3 0h6V433h-6zM166 124m-3 0h6V305h-6zM202 130m-3 0h6V155h-6zM214 121m-3 0h6V131h-6zM262 394m-3 0h6V471h-6zM310 589m-3 0h6V596h-6zM322 559m-3 0h6V590h-6zM334 613m-3 0h6V641h-6zM346 568m-3 0h6V617h-6zM358 489m-3 0h6V569h-6zM394 631m-3 0h6V656h-6zM406 625m-3 0h6V653h-6zM418 495m-3 0h6V627h-6zM442 460m-3 0h6V506h-6zM454 364m-3 0h6V461h-6zM478 274m-3 0h6V368h-6zM490 217m-3 0h6V275h-6zM526 400m-3 0h6V419h-6zM538 394m-3 0h6V401h-6zM562 385m-3 0h6V401h-6zM586 367m-3 0h6V386h-6zM598 283m-3 0h6V367h-6zM622 235m-3 0h6V293h-6zM634 133m-3 0h6V236h-6zM646 115m-3 0h6V133h-6z"/>
</g>
<g transform="translate(1380.17 90.17) scale(.33333)" stroke="#000" stroke-width="3">
<path fill="none" d="M130 858V1190M142 845V900M154 805V900M166 620V822M178 495V655M190 352V535M202 268V450M214 272V348M226 232V392M238 232V372M250 262V470M262 82V356M274 112V248M286 132V198M298 165V258M310 246V302"/>
<path fill="#000" stroke-width="9" d="M214 273V332M238 247V305M274 145V155M286 157V173M298 190V257"/>
<path fill="#fff" d="M130 868m-3 0h6V1168h-6zM142 853m-3 0h6V870h-6zM154 817m-3 0h6V887h-6zM166 631m-3 0h6V820h-6zM178 517m-3 0h6V631h-6zM190 379m-3 0h6V517h-6zM202 271m-3 0h6V377h-6zM226 250m-3 0h6V350h-6zM250 287m-3 0h6V305h-6zM262 145m-3 0h6V287h-6zM310 250m-3 0h6V257h-6z"/>
</g>
</g>
<!-- order lines -->
<path d="M278 248H1602M278 287H1602" stroke="#ffd700" stroke-width="2"/>
<polygon points="1484,75 1493,75 1488.500,80" fill="#b0b0b0"/>
<!-- axis -->
<path d="M278 974.500H1872.500V75" fill="none" stroke="#000"/>
<line x1="1875" y1="80" x2="1875" y2="974" stroke="#000" stroke-width="4" stroke-dasharray="1 32"/>
<!-- bands -->
<rect x="1537" y="75" width="2" height="899" fill="#c0c0c0"/><rect x="1566" y="75" width="3" height="899" fill="#c0c0c0"/><rect x="1596" y="75" width="2" height="899" fill="#c8c8c8"/>
</svg>
<div class="box" style="left:1539px;top:75px;width:27px;height:899px;background:repeating-linear-gradient(#808080 0 4.800px,#666 4.800px 6px)"></div>
<div class="box" style="left:1569px;top:75px;width:27px;height:899px;background:repeating-linear-gradient(#ff9672 0 4.800px,#ee7f60 4.800px 6px)"></div>
<div class="box" style="left:1539px;top:247px;width:27px;height:2px;background:#806c00"></div><div class="box" style="left:1539px;top:286px;width:27px;height:2px;background:#806c00"></div>
<div class="box" style="left:1569px;top:247px;width:27px;height:2px;background:#ff9000"></div><div class="box" style="left:1569px;top:286px;width:27px;height:2px;background:#ff9000"></div>
<div class="box" style="left:1539px;top:173px;width:27px;height:1px;background:#999"></div><div class="box" style="left:1569px;top:173px;width:27px;height:1px;background:#ffb090"></div>

<div class="t" style="left:1402px;top:249px;color:#ffd92e;font-size:10.800px">Buy limit 1.00 lots</div>
<div class="t" style="left:1401px;top:288px;color:#ffd92e;font-size:10.800px">Sell stop 1.00 lots</div>

<svg class="box" style="left:282px;top:79px" width="8" height="8"><path d="M0 1h7L3.500 6z"/></svg>
<div class="t" style="left:294px;top:76px;font-size:9.500px">USDJPY,H4&nbsp; 113.438 113.457 113.347 113.446</div>

<!-- price axis labels -->
<div class="p" style="top:74px">114.010</div><div class="p" style="top:107px">113.810</div><div class="p" style="top:140px">113.610</div><div class="p" style="top:173px">113.410</div><div class="p" style="top:206px">113.210</div><div class="p" style="top:272px">112.810</div><div class="p" style="top:305px">112.610</div><div class="p" style="top:338px">112.410</div><div class="p" style="top:371px">112.210</div><div class="p" style="top:404px">112.010</div><div class="p" style="top:437px">111.810</div><div class="p" style="top:470px">111.610</div><div class="p" style="top:503px">111.410</div><div class="p" style="top:536px">111.210</div><div class="p" style="top:569px">111.010</div><div class="p" style="top:602px">110.810</div><div class="p" style="top:635px">110.605</div><div class="p" style="top:668px">110.405</div><div class="p" style="top:701px">110.205</div><div class="p" style="top:734px">110.005</div><div class="p" style="top:767px">109.805</div><div class="p" style="top:800px">109.605</div><div class="p" style="top:833px">109.405</div><div class="p" style="top:866px">109.205</div><div class="p" style="top:899px">109.005</div><div class="p" style="top:932px">108.805</div><div class="p" style="top:965px">108.605</div>
<div class="p" style="left:1874px;top:168px;width:42px;height:11px;background:#000;color:#fff;padding-left:4px;box-sizing:border-box;line-height:11px">113.446</div>
<div class="p" style="left:1874px;top:242px;width:42px;height:11px;background:#ffd700;color:#fff;padding-left:4px;box-sizing:border-box;line-height:11px">112.996</div>
<div class="p" style="left:1874px;top:281px;width:42px;height:11px;background:#ffd700;color:#fff;padding-left:4px;box-sizing:border-box;line-height:11px">112.756</div>

<!-- expert panel -->
<div class="box" style="left:1602px;top:75px;width:270px;height:899px;background:#5b5468;overflow:hidden"></div>
<div class="box" style="left:1612px;top:85px;width:95px;height:21px;border:1px solid #4c4860;border-radius:2px"></div>
<div class="t" style="left:1617px;top:88px;color:#eee;font-size:12px">USDJPY</div>
<div class="box" style="left:1685px;top:88px;width:19px;height:15px;background:#efefef"></div>
<svg class="box" style="left:1685px;top:88px" width="19" height="15"><path d="M5 5l4.500 5L14 5" fill="none" stroke="#000" stroke-width="2"/></svg>
<div class="box" style="left:1711px;top:82px;width:69px;height:22px;border-radius:3px;background:linear-gradient(#333,#000 30%,#000 70%,#333);border:1px solid #444"></div>
<div class="box" style="left:1798px;top:86px;width:16px;height:15px;background:#b08210;border-radius:2px"></div>
<div class="box" style="left:1818px;top:86px;width:16px;height:15px;background:#14a4e4;border-radius:2px"></div>
<div class="box" style="left:1836px;top:86px;width:16px;height:15px;background:#e8b83c;border-radius:2px"></div>
<svg class="box" style="left:1798px;top:86px" width="54" height="15"><path d="M4 3.500h5v5H4zM7 7h5v5H7z" fill="none" stroke="#fff" stroke-width="1.300"/><circle cx="28" cy="7.500" r="2.800" fill="none" stroke="#fff" stroke-width="2.200"/><circle cx="28" cy="7.500" r="4.800" fill="none" stroke="#fff" stroke-width="1.800" stroke-dasharray="2 1.770"/><g fill="#fff" opacity=".85"><circle cx="44" cy="4" r="2"/><circle cx="50" cy="4" r="2"/><circle cx="44" cy="11" r="2"/><circle cx="50" cy="11" r="2"/></g></svg>

<div class="t w" style="left:1613px;top:115px">Lots:</div><div class="t w" style="left:1613px;top:137px">S/L:</div><div class="t w" style="left:1748px;top:115px">T/S:</div><div class="t w" style="left:1748px;top:137px">T/P:</div>
<div class="in" style="left:1657px;top:112px">0.01</div><div class="sp" style="left:1699px;top:112px"></div>
<div class="in" style="left:1657px;top:134px">0</div><div class="sp" style="left:1699px;top:134px"></div>
<div class="in" style="left:1778px;top:112px">0</div><div class="sp" style="left:1820px;top:112px"></div>
<div class="in" style="left:1778px;top:134px">0</div><div class="sp" style="left:1820px;top:134px"></div>
<svg class="box" style="left:1699px;top:112px" width="131" height="42" fill="#111"><path d="M2 7.500h6L5 3.500zM2 12.500h6L5 16.500zM2 29.500h6L5 25.500zM2 34.500h6L5 38.500zM123 7.500h6l-3-4zM123 12.500h6l-3 4zM123 29.500h6l-3-4zM123 34.500h6l-3 4z"/></svg>

<svg class="box" style="left:1602px;top:150px" width="270" height="85" viewBox="1602 150 270 85">
<path d="M1610 161.500H1726.500V200H1686q-5 0-5 5V225H1613q-3 0-3-3z" fill="url(#bt)" stroke="#2e2a38"/>
<path d="M1736.500 161.500H1853.500V222q0 3-3 3H1780V205q0-5-5-5H1736.500z" fill="url(#bt)" stroke="#2e2a38"/>
<path d="M1611 226H1680M1781 226H1852" stroke="#7a7488"/>
<rect x="1687" y="205" width="87" height="19" rx="4" fill="#000" stroke="#333"/>
<polygon points="1695,169 1706,169 1706,178 1711,178 1700.500,191 1690,178 1695,178" fill="url(#ra)" stroke="#6a0a14"/>
<polygon points="1756.500,169 1767.500,169 1767.500,178 1772,178 1762,191 1751,178 1756.500,178" fill="url(#ra)" stroke="#6a0a14"/>
</svg>
<div class="t" style="left:1624px;top:172px;color:#f00;font-size:14px;line-height:20px">113.</div>
<div class="t" style="left:1650px;top:163px;color:#f00;font-size:24px;line-height:30px">44</div>
<div class="t" style="left:1678px;top:172px;color:#f00;font-size:14px;line-height:20px">6</div>
<div class="t" style="left:1776px;top:172px;color:#f00;font-size:14px;line-height:20px">113.</div>
<div class="t" style="left:1803px;top:163px;color:#f00;font-size:24px;line-height:30px">44</div>
<div class="t" style="left:1831px;top:172px;color:#f00;font-size:14px;line-height:20px">9</div>
<div class="t" style="left:1635px;top:204px;color:#f00;font:bold 14px/14px 'Liberation Serif',serif">Sell</div>
<div class="t" style="left:1804px;top:204px;color:#f00;font:bold 14px/14px 'Liberation Serif',serif">Buy</div>
<div class="t" style="left:1721px;top:208px;color:#fff;font-size:12px">0.3</div>

<!-- panel scrollbar -->
<div class="box" style="left:1856px;top:235px;width:16px;height:739px;background:#f0f0f0"></div>
<div class="box" style="left:1856px;top:268px;width:16px;height:625px;background:#c8c8c8"></div>
<svg class="box" style="left:1856px;top:235px" width="16" height="739"><path d="M3 26l5-5 5 5M3 713l5 5 5-5" fill="none" stroke="#555" stroke-width="2.500"/></svg>

<!-- volume -->
<div class="bx" style="top:242px;height:117px"></div><div class="ln" style="top:265px"></div>
<svg class="box" style="left:1615px;top:251px" width="8" height="8"><path d="M0 1h7.500L3.750 6z" fill="#fff"/></svg>
<div class="t hd" style="top:249px">Volume</div>
<div class="btn" style="left:1615px;top:272px">0.10</div><div class="btn" style="left:1650px;top:272px">0.20</div><div class="btn" style="left:1685px;top:272px">0.30</div><div class="btn" style="left:1720px;top:272px">0.40</div><div class="btn" style="left:1755px;top:272px">0.50</div><div class="btn" style="left:1790px;top:272px">1</div>
<div class="btn" style="left:1615px;top:299px">2</div><div class="btn" style="left:1650px;top:299px">3</div><div class="btn" style="left:1685px;top:299px">4</div><div class="btn" style="left:1720px;top:299px">5</div><div class="btn" style="left:1755px;top:299px">10</div><div class="btn" style="left:1790px;top:299px">20</div>
<div class="btn" style="left:1615px;top:326px">...</div>

<!-- account -->
<div class="bx" style="top:367px;height:146px"></div><div class="ln" style="top:391px"></div>
<svg class="box" style="left:1615px;top:376px" width="8" height="8"><path d="M0 1h7.500L3.750 6z" fill="#fff"/></svg>
<div class="t hd" style="top:374px">Account info</div>
<div class="t dv" style="left:1615px;top:398px">Floating P/L</div><div class="t dv" style="right:90px;top:398px">0.00</div>
<div class="t dv" style="left:1615px;top:416px">Equity</div><div class="t dv" style="right:90px;top:416px">9409.65</div>
<div class="t dv" style="left:1615px;top:435px">Balance</div><div class="t dv" style="right:90px;top:435px">9409.65</div>
<div class="t dv" style="left:1615px;top:454px">Margin In Use</div><div class="t dv" style="right:90px;top:454px">0.00</div>
<div class="t dv" style="left:1615px;top:472px">Free Margin</div><div class="t dv" style="right:90px;top:472px">9409.65</div>
<div class="t dv" style="left:1615px;top:491px">Margin level</div><div class="t dv" style="right:90px;top:491px">-</div>

<!-- open positions -->
<div class="bx" style="top:521px;height:23px"></div>
<svg class="box" style="left:1616px;top:530px" width="8" height="8"><path d="M1 0v7.500L6 3.750z" fill="#fff"/></svg>
<div class="t hd" style="top:528px">Open Positions</div>

<!-- chart controls -->
<div class="bx" style="top:552px;height:172px"></div><div class="ln" style="top:575px"></div>
<svg class="box" style="left:1615px;top:561px" width="8" height="8"><path d="M0 1h7.500L3.750 6z" fill="#fff"/></svg>
<div class="t hd" style="top:559px">Chart controls</div>
<div class="btn" style="left:1615px;top:581px"></div><div class="btn on" style="left:1650px;top:581px"></div><div class="btn" style="left:1685px;top:581px"></div>
<div class="btn" style="left:1725px;top:581px;width:98px"></div>
<svg class="box" style="left:1615px;top:581px" width="208" height="22"><path d="M11 6v11M11 8H9M11 14h2" stroke="#3a9a50" stroke-width="1.800" fill="none"/><path d="M18 5v10M18 7h-2M18 13h2" stroke="#b83030" stroke-width="1.800" fill="none"/><path d="M44.500 5v13" stroke="#3a8a50"/><rect x="42.500" y="8.500" width="4" height="7" fill="#cfe8d4" stroke="#3a8a50"/><path d="M52.500 4v12" stroke="#b83030"/><rect x="50.500" y="6.500" width="4" height="7" fill="#f0a0a0" stroke="#b83030"/><path d="M76 14l6.500-5 6.500 5" fill="none" stroke="#b83030" stroke-width="2.200"/><path d="M116 11l40-.5" stroke="#fff" stroke-width="1.500" opacity=".4"/><path d="M142 9.500h63v5h-63z" fill="#f4f4f4"/><circle cx="151" cy="11" r="7" fill="#fff"/></svg>
<div class="btn" style="left:1615px;top:609px">GRD</div><div class="btn on" style="left:1650px;top:609px">TRD</div><div class="btn on" style="left:1685px;top:609px">MRK</div><div class="btn on" style="left:1720px;top:609px">LDR</div>
<div class="btn on" style="left:1615px;top:636px">BID</div><div class="btn" style="left:1650px;top:636px">ASK</div><div class="btn" style="left:1685px;top:636px">PER</div><div class="btn" style="left:1720px;top:636px">VOL</div><div class="btn" style="left:1755px;top:636px">HST</div>
<div class="btn" style="left:1615px;top:664px">HL0</div><div class="btn" style="left:1650px;top:664px">HL1</div><div class="btn" style="left:1685px;top:664px">HLS</div><div class="btn" style="left:1720px;top:664px">PVT</div><div class="btn" style="left:1755px;top:664px">CNT</div>
<div class="btn" style="left:1615px;top:692px"></div><div class="btn" style="left:1650px;top:692px"></div><div class="btn" style="left:1685px;top:692px"></div><div class="btn" style="left:1720px;top:692px"></div><div class="btn" style="left:1755px;top:692px">HSC</div><div class="btn" style="left:1790px;top:692px">VSC</div>
<svg class="box" style="left:1615px;top:692px" width="140" height="22" fill="#c8c8c8"><path d="M10 6h2v10h-2zM17 6v10l-5-5zM22 6v10l-5-5z"/><path d="M46 6h2v10h-2zM54 6v10l-6-5z"/><path d="M86 6h2v10h-2zM80 6v10l6-5z"/><path d="M113 6v10l5-5zM118 6v10l5-5zM123 6h2v10h-2z"/></svg>

<!-- lot size -->
<div class="bx" style="top:732px;height:125px"></div><div class="ln" style="top:755px"></div>
<svg class="box" style="left:1615px;top:741px" width="8" height="8"><path d="M0 1h7.500L3.750 6z" fill="#fff"/></svg>
<div class="t hd" style="top:739px">Lot size calculation</div>
<div class="t lc" style="left:1615px;top:765px">S/L:</div><div class="wi" style="left:1648px;top:761px;width:52px">0</div><div class="t lc" style="left:1705px;top:765px;letter-spacing:1.200px">pips</div>
<div class="rad" style="top:791px"></div><div class="box" style="left:1618px;top:793px;width:7px;height:7px;border-radius:50%;background:#000"></div>
<div class="rad" style="top:812px"></div><div class="rad" style="top:833px"></div>
<div class="t lc" style="left:1633px;top:791px">Fixed cash risk: USD</div><div class="wi" style="left:1773px;top:789px;width:56px"></div>
<div class="t lc" style="left:1633px;top:812px">% of equity:</div><div class="wi" style="left:1719px;top:810px;width:52px"></div>
<div class="t lc" style="left:1633px;top:833px">% of balance:</div><div class="wi" style="left:1729px;top:831px;width:52px"></div>

<!-- symbol info -->
<div class="bx" style="top:865px;height:109px;border-bottom:0"></div><div class="ln" style="top:887px"></div>
<svg class="box" style="left:1615px;top:874px" width="8" height="8"><path d="M0 1h7.500L3.750 6z" fill="#fff"/></svg>
<div class="t hd" style="top:872px">Symbol information</div>
<div class="t" style="left:1651px;top:892px;color:#f00;font-size:24px;line-height:28px">-0.11%</div>
<div class="t" style="left:1652px;top:922px;color:#f00;font-size:16.400px;line-height:20px">-12.2 pips</div>
<div class="t" style="left:1773px;top:892px;color:#fff;font-size:10px;line-height:13px">113.618</div>
<div class="t" style="left:1773px;top:931px;color:#fff;font-size:10px;line-height:13px">113.347</div>
<div class="box" style="left:1812px;top:893px;width:30px;height:32px;background:#c00000"></div>
<div class="box" style="left:1812px;top:925px;width:30px;height:18px;background:#00c000"></div>
<div class="box" style="left:1602px;top:958px;width:254px;height:16px;overflow:hidden">
<div class="t dv" style="left:33px;top:3px;color:#d6e4f0;letter-spacing:.4px">Trend</div><div class="t dv" style="left:92px;top:3px;color:#d6e4f0">Momentum</div><div class="t dv" style="left:174px;top:3px;color:#d6e4f0">Strength</div></div>

<!-- bottom tabs -->
<div class="box" style="left:278px;top:975px;width:1642px;height:20px;background:#fff"></div>
<div class="box" style="left:1918px;top:75px;width:2px;height:921px;background:#e0e0e0"></div>
<div class="x" style="left:278px">4 Aug 2021</div><div class="x" style="left:342px">6 Aug 16:00</div><div class="x" style="left:406px">11 Aug 08:00</div><div class="x" style="left:470px">16 Aug 00:00</div><div class="x" style="left:534px">18 Aug 16:00</div><div class="x" style="left:598px">23 Aug 08:00</div><div class="x" style="left:662px">26 Aug 00:00</div><div class="x" style="left:726px">30 Aug 16:00</div><div class="x" style="left:790px">2 Sep 08:00</div><div class="x" style="left:854px">7 Sep 00:00</div><div class="x" style="left:918px">9 Sep 16:00</div><div class="x" style="left:982px">14 Sep 08:00</div><div class="x" style="left:1046px">17 Sep 00:00</div><div class="x" style="left:1110px">21 Sep 16:00</div><div class="x" style="left:1174px">24 Sep 08:00</div><div class="x" style="left:1238px">29 Sep 00:00</div><div class="x" style="left:1302px">1 Oct 16:00</div><div class="x" style="left:1366px">6 Oct 08:00</div><div class="x" style="left:1430px">11 Oct 00:00</div>
<svg class="box" style="left:278px;top:974px" width="1600" height="5"><path d="M0 .5H1594.500" stroke="#000"/><line x1="1" y1="2.500" x2="1594" y2="2.500" stroke="#000" stroke-width="4" stroke-dasharray="1 63"/></svg>
<div class="box" style="left:277px;top:995px;width:1643px;height:2px;background:#d8d8d8"></div>
<div class="box" style="left:275px;top:997px;width:1645px;height:1px;background:#000"></div>
<div class="box" style="left:275px;top:998px;width:1645px;height:19px;background:#f0f0f0"></div>
<div class="t" style="left:291px;top:1000px;color:#666">EURUSD,H1</div>
<div class="box" style="left:365px;top:997px;width:79px;height:20px;background:#fff;border:1px solid #000;border-top:0"></div>
<div class="t" style="left:375px;top:1000px">USDJPY,H4</div>
<svg class="box" style="left:1880px;top:1000px" width="36" height="12" fill="#888"><path d="M11 2v8L6 6zM26 2v8l5-4z"/></svg>
<div class="box" style="left:0;top:1017px;width:1920px;height:1px;background:#fff"></div>
<div class="box" style="left:0;top:1018px;width:1920px;height:21px;background:#f0f0f0"></div>
<div class="t" style="left:2px;top:1023px">For Help, press F1</div>
<div class="box" style="left:1227px;top:1021px;width:1px;height:18px;background:#a8a8a8"></div>
<div class="t" style="left:1233px;top:1023px">Default</div>
<div class="box" style="left:1654px;top:1021px;width:1px;height:18px;background:#a8a8a8"></div>
<div class="box" style="left:1724px;top:1021px;width:1px;height:18px;background:#a8a8a8"></div>
<div class="box" style="left:1791px;top:1021px;width:1px;height:18px;background:#a8a8a8"></div>
<svg class="box" style="left:1796px;top:1023px" width="24" height="14"><g stroke-width="1.500"><path d="M1 0v7M4 0v7M7 0v6M10 0v5M13 0v4M16 0v3M19 0v2M22 0v1" stroke="#5a7a00"/><path d="M1 8v6M4 8v6M7 7v7M10 6v8M13 5v9M16 4v10M19 3v11M22 2v12" stroke="#8a1010"/></g></svg>
<div class="t" style="left:1823px;top:1023px">1477/2 kb</div>
</body></html>
